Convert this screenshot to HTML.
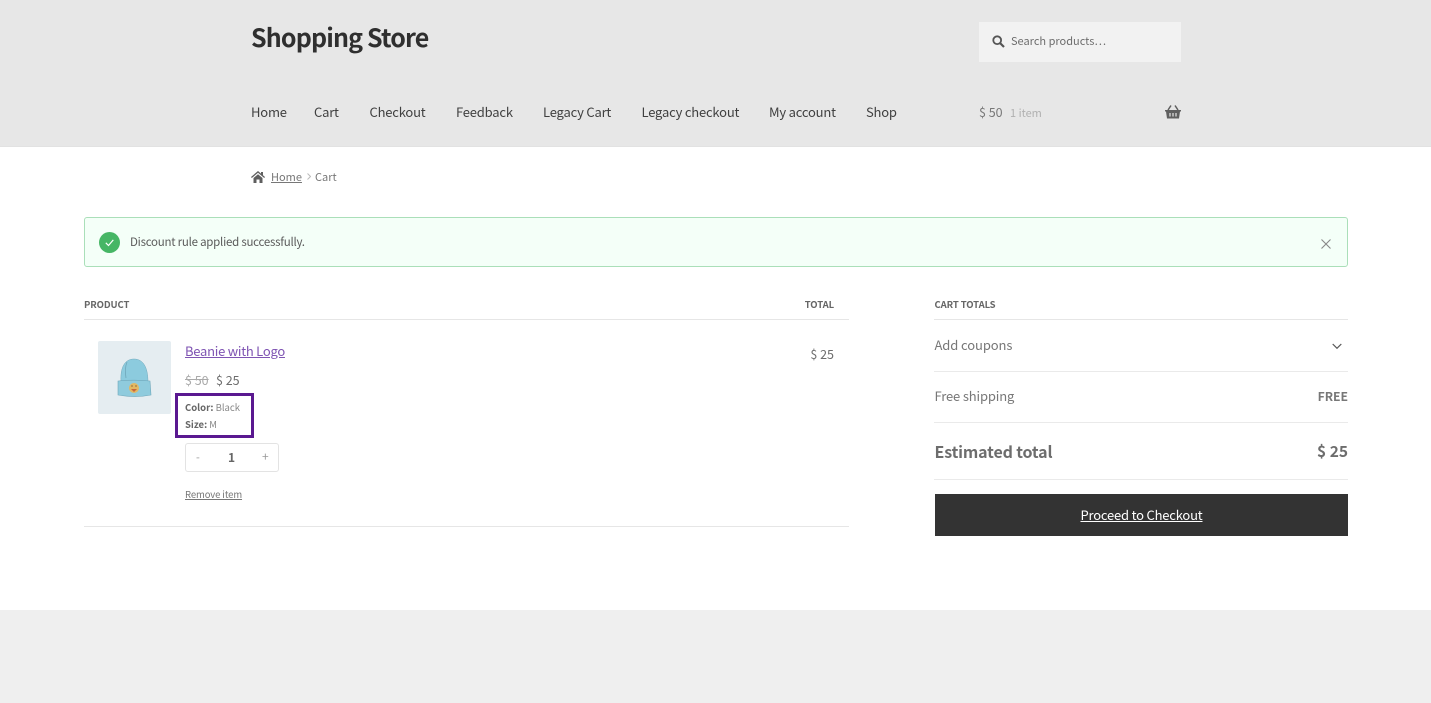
<!DOCTYPE html>
<html><head><meta charset="utf-8"><style>
html,body{margin:0;padding:0;width:1431px;height:703px;overflow:hidden;background:#fff}
body{position:relative;font-family:"Noto Sans CJK JP","Liberation Sans",sans-serif;color:#6d6d6d}
.t{position:absolute;white-space:nowrap;line-height:20px;height:20px}
.b{position:absolute}
.n{font-size:13px;letter-spacing:-.2px;color:#404040;top:102px}
.r{text-align:right}
.h{font-size:9.500px;letter-spacing:-.1px;font-weight:700;color:#666;top:294px}
</style></head><body>
<div class="b" style="left:0;top:0;width:1431px;height:147px;background:#e7e7e7;border-bottom:1px solid #e2e2e2;box-sizing:border-box"></div>
<div class="b" style="left:0;top:610px;width:1431px;height:93px;background:#efefef"></div>
<div class="t" style="left:251px;top:27px;font-size:25px;font-weight:700;color:#2f2f2f;letter-spacing:-.85px">Shopping Store</div>
<div class="b" style="left:979px;top:22px;width:202px;height:40px;background:#f2f2f2"></div>
<svg class="b" style="left:992px;top:35px" width="13" height="13" viewBox="0 0 13 13"><circle cx="5.200" cy="5.200" r="3.900" fill="none" stroke="#555" stroke-width="1.800"/><path d="M8 8l4 4" stroke="#555" stroke-width="2.200"/></svg>
<div class="t" style="left:1011px;top:31px;font-size:11px;color:#6d6d6d">Search products…</div>
<div class="t n" style="left:251px">Home</div>
<div class="t n" style="left:314px">Cart</div>
<div class="t n" style="left:369.500px">Checkout</div>
<div class="t n" style="left:456px">Feedback</div>
<div class="t n" style="left:543px">Legacy Cart</div>
<div class="t n" style="left:641.500px">Legacy checkout</div>
<div class="t n" style="left:769px">My account</div>
<div class="t n" style="left:866px">Shop</div>
<div class="t" style="left:979px;top:102px;font-size:12.500px;color:#777">$ 50</div>
<div class="t" style="left:1010px;top:103px;font-size:11px;color:#b0b0b0">1 item</div>
<svg class="b" style="left:1165px;top:105px" width="16" height="14" viewBox="0 0 16 14"><path d="M0 5h16v1.500h-1L14 13.500H2L1 6.500H0z" fill="#5f5f5f"/><path d="M3 5l3-4.500M13 5l-3-4.500" stroke="#5f5f5f" stroke-width="1.500" fill="none"/><path d="M5 8v3.500M8 8v3.500M11 8v3.500" stroke="#e7e7e7" stroke-width="1.200"/></svg>
<svg class="b" style="left:251px;top:171px" width="14" height="12" viewBox="0 0 14 12"><path d="M7 0L0 6l.8 1L7 1.800 13.200 7l.8-1-2-1.700V1h-2v1.600z" fill="#5f5f5f"/><path d="M2.500 7L7 3.200 11.500 7v5H8.500V8.500h-3V12h-3z" fill="#5f5f5f"/></svg>
<div class="t" style="left:271px;top:167px;font-size:11px;color:#777;text-decoration:underline">Home</div>
<svg class="b" style="left:307px;top:173px" width="4" height="7" viewBox="0 0 4 7"><path d="M.5.500l3 3-3 3" stroke="#bbb" fill="none"/></svg>
<div class="t" style="left:315px;top:167px;font-size:11px;color:#777">Cart</div>
<div class="b" style="left:84px;top:217px;width:1264px;height:50px;box-sizing:border-box;background:#f4fff8;border:1px solid #aadfb9;border-radius:3px"></div>
<svg class="b" style="left:99px;top:232px" width="21" height="21" viewBox="0 0 21 21"><circle cx="10.500" cy="10.500" r="10.500" fill="#46b665"/><path d="M6.800 10.800l2.700 2.700 4.800-5.600" stroke="#fff" stroke-width="1.200" fill="none"/></svg>
<div class="t" style="left:130px;top:232px;font-size:11.500px;letter-spacing:-.25px;color:#5b5b5b">Discount rule applied successfully.</div>
<svg class="b" style="left:1321px;top:239px" width="10" height="10" viewBox="0 0 10 10"><path d="M.5.500l9 9M9.500.500l-9 9" stroke="#888" stroke-width="1.100"/></svg>
<div class="t h" style="left:84px">PRODUCT</div>
<div class="t r h" style="right:597px">TOTAL</div>
<div class="b" style="left:84px;top:319px;width:765px;height:1px;background:#e6e6e6"></div>
<div class="b" style="left:98px;top:341px;width:73px;height:73px;background:#e5edf1;border-radius:2px"></div>
<svg class="b" style="left:116px;top:357px" width="36" height="42" viewBox="0 0 36 42"><path d="M5 25C4 10 9 2 18 2s14 8 14 23z" fill="#8ccbde" stroke="#74aabd" stroke-width=".5"/><path d="M2 24c10-1 22-1 32 0l1 14c-10 2-22 2-33 0z" fill="#8fcbdd" stroke="#6fa7ba" stroke-width=".6"/><path d="M11 5c-2 5-2 10-1 16" stroke="#6fa7ba" stroke-width=".8" fill="none"/><circle cx="18" cy="31" r="5" fill="#e3b862"/><path d="M15 32h6l-3 3z" fill="#c8663c"/><path d="M15 29h2M19 29h2" stroke="#7a5a30" stroke-width=".7"/></svg>
<div class="t" style="left:185px;top:341px;font-size:13px;letter-spacing:-.25px;color:#7f54b3;text-decoration:underline">Beanie with Logo</div>
<div class="t" style="left:185px;top:370px;font-size:12.500px;color:#aaa;text-decoration:line-through">$ 50</div>
<div class="t" style="left:216px;top:370px;font-size:12.500px;color:#6d6d6d">$ 25</div>
<div class="b" style="left:175px;top:393px;width:79px;height:45px;box-sizing:border-box;border:3.500px solid #5a1890"></div>
<div class="t" style="left:185px;top:397px;font-size:9.500px;color:#888"><b style="color:#666">Color:</b> Black</div>
<div class="t" style="left:185px;top:414px;font-size:9.500px;color:#888"><b style="color:#666">Size:</b> M</div>
<div class="b" style="left:185px;top:443px;width:94px;height:29px;box-sizing:border-box;border:1px solid #e3e3e3;border-radius:3px"></div>
<div class="t" style="left:196px;top:447px;font-size:11px;color:#999">-</div>
<div class="t" style="left:228px;top:448px;font-size:12px;font-weight:700;color:#666">1</div>
<div class="t" style="left:262px;top:447px;font-size:12px;color:#999">+</div>
<div class="t" style="left:185px;top:484px;font-size:9.500px;letter-spacing:-.1px;color:#777;text-decoration:underline">Remove item</div>
<div class="t r" style="right:597px;top:344px;font-size:12.500px;color:#6d6d6d">$ 25</div>
<div class="b" style="left:84px;top:526px;width:765px;height:1px;background:#e6e6e6"></div>
<div class="t h" style="left:934.500px">CART TOTALS</div>
<div class="b" style="left:934px;top:319px;width:414px;height:1px;background:#e6e6e6"></div>
<div class="t" style="left:934.500px;top:335px;font-size:13px;letter-spacing:-.1px;color:#777">Add coupons</div>
<svg class="b" style="left:1332px;top:343px" width="10" height="7" viewBox="0 0 10 7"><path d="M.7 1L5 5.300 9.300 1" stroke="#555" stroke-width="1.200" fill="none"/></svg>
<div class="b" style="left:934px;top:371px;width:414px;height:1px;background:#eaeaea"></div>
<div class="t" style="left:934.500px;top:386px;font-size:13px;letter-spacing:-.15px;color:#777">Free shipping</div>
<div class="t r" style="right:83px;top:386px;font-size:12.200px;font-weight:700;color:#777">FREE</div>
<div class="b" style="left:934px;top:422px;width:414px;height:1px;background:#eaeaea"></div>
<div class="t" style="left:934.500px;top:441px;font-size:16px;letter-spacing:-.15px;font-weight:700;color:#6d6d6d">Estimated total</div>
<div class="t r" style="right:83px;top:441px;font-size:15.500px;font-weight:700;color:#6d6d6d">$ 25</div>
<div class="b" style="left:934px;top:479px;width:414px;height:1px;background:#eaeaea"></div>
<div class="b" style="left:935px;top:494px;width:413px;height:42px;background:#333"></div>
<div class="t" style="left:935px;width:413px;text-align:center;top:505px;font-size:13px;letter-spacing:-.2px;color:#fff;text-decoration:underline">Proceed to Checkout</div>
</body></html>
